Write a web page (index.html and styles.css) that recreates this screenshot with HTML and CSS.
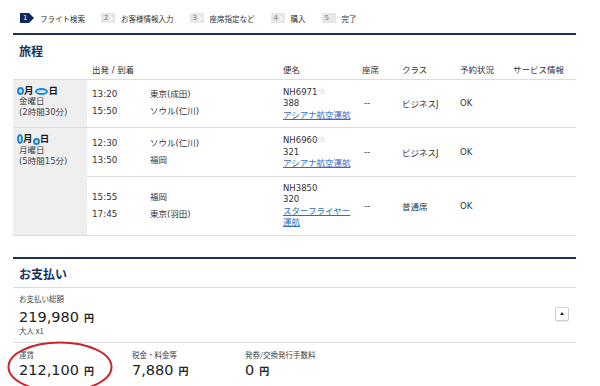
FILE: index.html
```html
<!DOCTYPE html>
<html lang="ja">
<head>
<meta charset="utf-8">
<title>旅程</title>
<link rel="stylesheet" href="styles.css">
</head>
<body>
<div class="page">
  <ol class="steps">
    <li class="step"><span class="badge current">1</span><span class="step-label">フライト検索</span></li>
    <li class="step"><span class="badge arrow">2</span><span class="step-label">お客様情報入力</span></li>
    <li class="step"><span class="badge arrow">3</span><span class="step-label">座席指定など</span></li>
    <li class="step"><span class="badge arrow">4</span><span class="step-label">購入</span></li>
    <li class="step"><span class="badge">5</span><span class="step-label">完了</span></li>
  </ol>

  <section class="section">
    <h2 class="section-title">旅程</h2>
    <table class="trip">
      <colgroup>
        <col class="c-date"><col class="c-time"><col class="c-place"><col class="c-flight">
        <col class="c-seat"><col class="c-class"><col class="c-status"><col class="c-service">
      </colgroup>
      <thead>
        <tr>
          <th></th>
          <th colspan="2" class="th-time">出発 / 到着</th>
          <th>便名</th>
          <th>座席</th>
          <th>クラス</th>
          <th>予約状況</th>
          <th>サービス情報</th>
        </tr>
      </thead>
      <tbody>
        <tr>
          <td class="date">
            <div class="day"><span class="blot b1"></span>月<span class="blot b2"></span>日</div>
            <div>金曜日</div>
            <div>(2時間30分)</div>
          </td>
          <td class="times"><div>13:20</div><div>15:50</div></td>
          <td class="places"><div>東京(成田)</div><div>ソウル(仁川)</div></td>
          <td class="flight"><div>NH6971<span class="star">☆</span></div><div>388</div><a href="#">アシアナ航空運航</a></td>
          <td class="seat">--</td>
          <td>ビジネスJ</td>
          <td>OK</td>
          <td></td>
        </tr>
        <tr>
          <td class="date" rowspan="2">
            <div class="day"><span class="blot b3"></span>月 <span class="blot b4"></span>日</div>
            <div>月曜日</div>
            <div>(5時間15分)</div>
          </td>
          <td class="times"><div>12:30</div><div>13:50</div></td>
          <td class="places"><div>ソウル(仁川)</div><div>福岡</div></td>
          <td class="flight"><div>NH6960<span class="star">☆</span></div><div>321</div><a href="#">アシアナ航空運航</a></td>
          <td class="seat">--</td>
          <td>ビジネスJ</td>
          <td>OK</td>
          <td></td>
        </tr>
        <tr>
          <td class="times"><div>15:55</div><div>17:45</div></td>
          <td class="places"><div>福岡</div><div>東京(羽田)</div></td>
          <td class="flight"><div>NH3850</div><div>320</div><a href="#">スターフライヤー運航</a></td>
          <td class="seat">--</td>
          <td>普通席</td>
          <td>OK</td>
          <td></td>
        </tr>
      </tbody>
    </table>
  </section>

  <section class="section payment">
    <h2 class="section-title">お支払い</h2>
    <div class="total">
      <div>
        <div class="label">お支払い総額</div>
        <div class="amount">219,980<span class="yen">円</span></div>
        <div class="pax">大人 x1</div>
      </div>
      <button class="toggle" type="button" aria-label="閉じる"></button>
    </div>
    <div class="breakdown">
      <div class="item"><div class="label">運賃</div><div class="amount">212,100<span class="yen">円</span></div></div>
      <div class="item"><div class="label">税金・料金等</div><div class="amount">7,880<span class="yen">円</span></div></div>
      <div class="item"><div class="label">発券/交換発行手数料</div><div class="amount">0<span class="yen">円</span></div></div>
    </div>
    <svg class="mark" width="108" height="54" viewBox="0 0 108 54"><ellipse cx="54" cy="27" rx="51.5" ry="24.5" fill="none" stroke="#c9242c" stroke-width="2"/></svg>
  </section>
</div>
</body>
</html>
```

FILE: styles.css
```css
* { box-sizing: border-box; margin: 0; padding: 0; }

body {
  margin: 0;
  background: #fff;
  color: #333;
  font-family: "DejaVu Sans", "Noto Sans CJK JP", sans-serif;
  font-size: 8.5px;
}

.page {
  width: 563px;
  margin-left: 13px;
}

/* steps */
.steps {
  list-style: none;
  display: flex;
  align-items: center;
  gap: 16px;
  height: 35px;
  padding: 3px 0 0 7px;
  border-bottom: 2px solid #1c2f55;
}

.step {
  display: flex;
  align-items: center;
}

.badge {
  position: relative;
  display: inline-block;
  width: 14px;
  height: 10px;
  padding-left: 3px;
  font-size: 7px;
  line-height: 10px;
  background: #e6e6e6;
  color: #777;
}

.badge.current {
  background: #0e2a5c;
  color: #fff;
  clip-path: polygon(0 0, 9px 0, 14px 50%, 9px 100%, 0 100%);
}

.badge.arrow::after {
  content: "";
  position: absolute;
  right: 3px;
  top: 3px;
  width: 4px;
  height: 4px;
  border-top: 1px solid #fff;
  border-right: 1px solid #fff;
  transform: rotate(45deg);
}

.step-label {
  margin-left: 6px;
  font-family: "Noto Sans CJK JP", sans-serif;
  font-size: 7.5px;
  color: #333;
}

/* sections */
.section {
  position: relative;
}

.section-title {
  padding: 9px 0 3px 6px;
  font-family: "Noto Sans CJK JP", sans-serif;
  font-size: 12px;
  line-height: 14px;
  font-weight: bold;
  color: #1a3260;
}

/* itinerary table */
.trip {
  width: 563px;
  table-layout: fixed;
  border-collapse: collapse;
  border-bottom: 1px solid #dcdcdc;
}

.c-date { width: 74px; }
.c-time { width: 63px; }
.c-place { width: 133px; }
.c-flight { width: 79px; }
.c-seat { width: 40px; }
.c-class { width: 58px; }
.c-status { width: 53px; }
.c-service { width: 63px; }

.trip th {
  height: 18px;
  text-align: left;
  font-weight: normal;
  vertical-align: middle;
  padding-bottom: 1px;
  border-bottom: 1px solid #dcdcdc;
  color: #333;
}

.trip th.th-time { padding-left: 5px; }

.trip td {
  vertical-align: middle;
  border-top: 1px solid #dcdcdc;
  color: #333;
}

.trip td.date {
  vertical-align: top;
  background: #efefef;
  padding: 6px 0 0 6px;
  line-height: 10.5px;
  color: #444;
}

.day {
  font-weight: bold;
  font-size: 9.5px;
  color: #1a1a1a;
}

.blot {
  display: inline-block;
  border: 2px solid #1d87d3;
  border-radius: 50%;
  background: #cfe6f7;
  vertical-align: -1px;
}

.b1 { width: 7px; height: 8px; margin-left: -2px; }
.b2 { width: 13px; height: 7px; margin: 0 1px; }
.b3 { width: 6px; height: 10px; margin-left: -2px; vertical-align: -2px; }
.b4 { width: 7px; height: 7px; margin-left: -3px; vertical-align: -3px; }

.trip td.times {
  padding-left: 5px;
  line-height: 17px;
  font-size: 8.8px;
}

.trip td.places {
  line-height: 17px;
}

.trip td.flight {
  padding: 6px 5px 6px 0;
  line-height: 11.5px;
}

.star {
  font-size: 8px;
  color: #9a9a9a;
  vertical-align: 1px;
  margin-left: 1px;
}

.flight a {
  color: #2f6fc0;
  text-decoration: underline;
}

.trip td.seat { padding-left: 2px; }

/* payment */
.payment {
  margin-top: 21px;
  border-top: 2px solid #1c2f55;
}

.payment .section-title {
  padding: 8px 0 6px 6px;
  border-bottom: 1px solid #dcdcdc;
}

.label {
  font-family: "Noto Sans CJK JP", sans-serif;
  font-size: 7.5px;
  line-height: 10px;
  color: #444;
}

.amount {
  font-size: 14.5px;
  line-height: 18px;
  color: #222;
}

.yen {
  margin-left: 5px;
  font-family: "Noto Sans CJK JP", sans-serif;
  font-size: 10px;
  font-weight: bold;
}

.total {
  display: flex;
  justify-content: space-between;
  align-items: center;
  padding: 6px 7px 7px 6px;
  border-bottom: 1px solid #dcdcdc;
}

.total .amount { margin-top: 4px; }

.pax {
  font-family: "Noto Sans CJK JP", sans-serif;
  font-size: 7.5px;
  line-height: 8px;
  color: #444;
}

.toggle {
  position: relative;
  width: 14px;
  height: 14px;
  border: 1px solid #cfcfcf;
  border-radius: 2px;
  background: #fff;
  box-shadow: 0 1px 1px rgba(0, 0, 0, 0.08);
}

.toggle::before {
  content: "";
  position: absolute;
  left: 4px;
  top: 4px;
  border-left: 2.5px solid transparent;
  border-right: 2.5px solid transparent;
  border-bottom: 3px solid #222;
}

.breakdown {
  display: grid;
  grid-template-columns: 113px 113px 113px;
  padding: 6px 0 7px 6px;
  border-bottom: 1px solid #dcdcdc;
}

.breakdown .label { line-height: 12px; }

.mark {
  position: absolute;
  left: -7px;
  top: 81px;
}
```
